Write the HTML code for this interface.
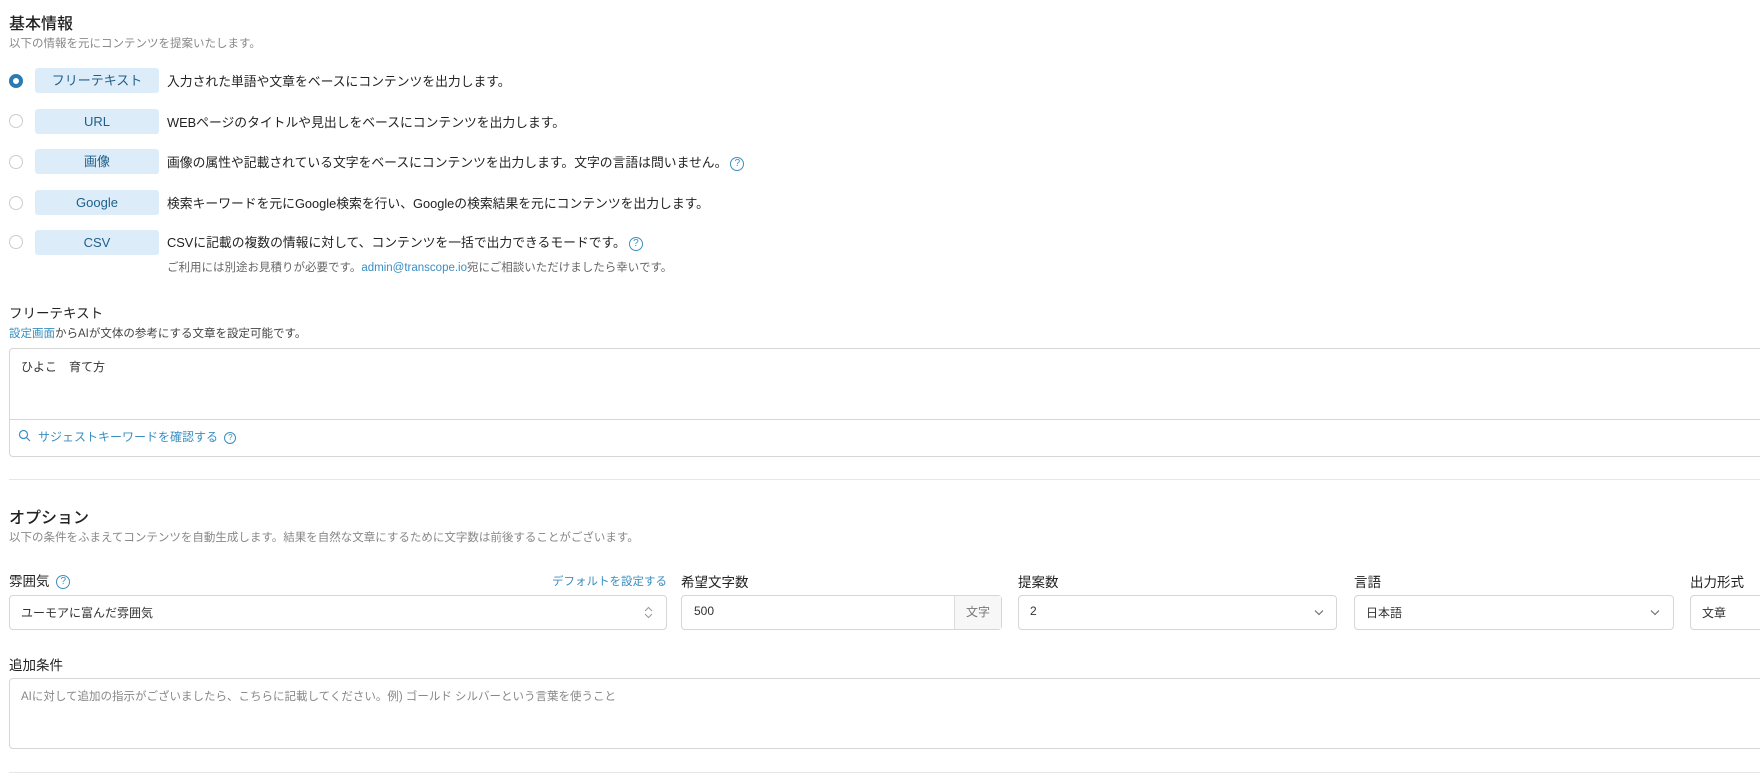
<!DOCTYPE html>
<html><head><meta charset="utf-8"><style>
*{box-sizing:border-box;margin:0;padding:0}
body{width:1760px;height:781px;overflow:hidden;background:#fff;font-family:"Liberation Sans","Noto Sans CJK JP",sans-serif;color:#333;position:relative}
.a{position:absolute;white-space:nowrap}
.h{font-size:16px;color:#222;font-weight:500}
.sub{font-size:11.5px;color:#888}
.radio{position:absolute;left:9px;width:14px;height:14px;border:1px solid #ccc;border-radius:50%;background:#fff}
.radio.on{border:4px solid #2a7bb4}
.tag{position:absolute;left:35px;width:124px;height:25px;background:#dcedf9;border-radius:3px;color:#1f5f8a;font-size:13px;text-align:center;line-height:26px}
.desc{font-size:12.8px;color:#222;left:167px}
.link{color:#3a8fc0}
.q{display:inline-block;width:14px;height:14px;border:1px solid #3a8fc0;border-radius:50%;color:#3a8fc0;font-size:10px;line-height:12px;text-align:center;vertical-align:middle;margin-left:3px}
.box{position:absolute;border:1px solid #d6d6d6;border-radius:4px;background:#fff}
.lab{font-size:13.5px;color:#222}
.val{font-size:12px;color:#333}
.hr{position:absolute;left:9px;right:0;height:1px;background:#e6e6e6}
.chev{position:absolute}
</style></head><body>
<div class="a h" style="left:9px;top:10px">基本情報</div>
<div class="a sub" style="left:9px;top:35px">以下の情報を元にコンテンツを提案いたします。</div>

<div class="radio on" style="top:74px"></div><div class="tag" style="top:68px">フリーテキスト</div>
<div class="a desc" style="top:71px">入力された単語や文章をベースにコンテンツを出力します。</div>
<div class="radio" style="top:114px"></div><div class="tag" style="top:109px">URL</div>
<div class="a desc" style="top:112px">WEBページのタイトルや見出しをベースにコンテンツを出力します。</div>
<div class="radio" style="top:155px"></div><div class="tag" style="top:149px">画像</div>
<div class="a desc" style="top:152px">画像の属性や記載されている文字をベースにコンテンツを出力します。文字の言語は問いません。<span class="q">?</span></div>
<div class="radio" style="top:196px"></div><div class="tag" style="top:190px">Google</div>
<div class="a desc" style="top:193px">検索キーワードを元にGoogle検索を行い、Googleの検索結果を元にコンテンツを出力します。</div>
<div class="radio" style="top:235px"></div><div class="tag" style="top:230px">CSV</div>
<div class="a desc" style="top:232px">CSVに記載の複数の情報に対して、コンテンツを一括で出力できるモードです。<span class="q">?</span></div>
<div class="a" style="left:167px;top:259px;font-size:11.5px;color:#666">ご利用には別途お見積りが必要です。<span class="link">admin@transcope.io</span>宛にご相談いただけましたら幸いです。</div>

<div class="a lab" style="left:9px;top:302px">フリーテキスト</div>
<div class="a" style="left:9px;top:325px;font-size:11.5px;color:#444"><span class="link">設定画面</span>からAIが文体の参考にする文章を設定可能です。</div>
<div class="box" style="left:9px;top:348px;width:1800px;height:72px;border-radius:4px 4px 0 0"></div>
<div class="a val" style="left:21px;top:358px">ひよこ　育て方</div>
<div class="box" style="left:9px;top:419px;width:1800px;height:38px;border-radius:0 0 4px 4px"></div>
<svg class="chev" style="left:18px;top:429px" width="13" height="13" viewBox="0 0 13 13"><circle cx="5.5" cy="5.5" r="4" fill="none" stroke="#3a8fc0" stroke-width="1.2"/><path d="M8.5 8.5L12 12" stroke="#3a8fc0" stroke-width="1.2"/></svg>
<div class="a link" style="left:38px;top:428px;font-size:12px">サジェストキーワードを確認する <span class="q" style="width:12px;height:12px;font-size:8px;line-height:10px">?</span></div>
<div class="hr" style="top:479px"></div>

<div class="a h" style="left:9px;top:504px">オプション</div>
<div class="a sub" style="left:9px;top:529px">以下の条件をふまえてコンテンツを自動生成します。結果を自然な文章にするために文字数は前後することがございます。</div>

<div class="a lab" style="left:9px;top:570px">雰囲気 <span class="q">?</span></div>
<div class="a link" style="right:1093px;top:573px;font-size:11.5px">デフォルトを設定する</div>
<div class="box" style="left:9px;top:595px;width:658px;height:35px"></div>
<div class="a val" style="left:21px;top:604px">ユーモアに富んだ雰囲気</div>
<svg class="chev" style="left:644px;top:606px" width="9" height="13" viewBox="0 0 9 13"><path d="M1 5L4.5 1.5L8 5M1 8L4.5 11.5L8 8" fill="none" stroke="#999" stroke-width="1"/></svg>

<div class="a lab" style="left:681px;top:571px">希望文字数</div>
<div class="box" style="left:681px;top:595px;width:321px;height:35px"></div>
<div class="a" style="left:954px;top:596px;width:47px;height:33px;background:#f7f7f7;border-left:1px solid #ddd;font-size:12px;color:#777;text-align:center;line-height:33px">文字</div>
<div class="a val" style="left:694px;top:604px">500</div>

<div class="a lab" style="left:1018px;top:571px">提案数</div>
<div class="box" style="left:1018px;top:595px;width:319px;height:35px"></div>
<div class="a val" style="left:1030px;top:604px">2</div>
<svg class="chev" style="left:1314px;top:609px" width="10" height="7" viewBox="0 0 10 7"><path d="M1 1.5L5 5.5L9 1.5" fill="none" stroke="#666" stroke-width="1.1"/></svg>

<div class="a lab" style="left:1354px;top:571px">言語</div>
<div class="box" style="left:1354px;top:595px;width:320px;height:35px"></div>
<div class="a val" style="left:1366px;top:604px">日本語</div>
<svg class="chev" style="left:1650px;top:609px" width="10" height="7" viewBox="0 0 10 7"><path d="M1 1.5L5 5.5L9 1.5" fill="none" stroke="#666" stroke-width="1.1"/></svg>

<div class="a lab" style="left:1690px;top:571px">出力形式</div>
<div class="box" style="left:1690px;top:595px;width:200px;height:35px"></div>
<div class="a val" style="left:1702px;top:604px">文章</div>

<div class="a lab" style="left:9px;top:654px">追加条件</div>
<div class="box" style="left:9px;top:678px;width:1800px;height:71px"></div>
<div class="a" style="left:21px;top:688px;font-size:11.5px;color:#888">AIに対して追加の指示がございましたら、こちらに記載してください。例) ゴールド シルバーという言葉を使うこと</div>
<div class="hr" style="top:772px"></div>
</body></html>
